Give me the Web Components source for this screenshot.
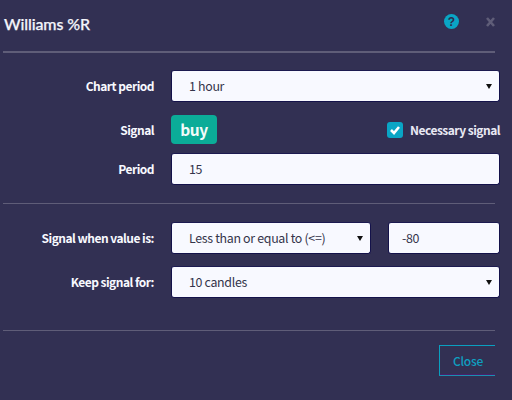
<!DOCTYPE html>
<html><head><meta charset="utf-8">
<style>
html,body{margin:0;padding:0;background:#323053;}
body{width:512px;height:400px;overflow:hidden;font-family:"Noto Sans CJK JP","Noto Sans",sans-serif;}
</style></head><body>
<template id="t-modal"><style>
:host{display:block;box-sizing:border-box;width:512px;height:400px;background:#323053;color:#f8f9ff;}
.head{display:flex;align-items:center;box-sizing:border-box;margin-left:3px;width:492px;border-bottom:2px solid #5f5d78;height:53px;padding-bottom:4px;}
.title{font:500 16px/22px Lato,sans-serif;letter-spacing:-.12px;flex:1;padding-left:1px;color:#f4f5fb;-webkit-text-stroke:.25px #f4f5fb;}
.body{padding-top:17px;display:flex;flex-direction:column;}
.foot{margin:32px 0 0 3px;width:492px;border-top:1px solid #5f5d78;padding-top:14px;display:flex;justify-content:flex-end;}
</style>
<div class="head"><div class="title"><slot name="title"></slot></div><slot name="tools"></slot></div>
<div class="body"><slot></slot></div>
<div class="foot"><slot name="foot"></slot></div>
</template>

<template id="t-row"><style>
:host{display:grid;grid-template-columns:154px 329px;column-gap:17px;align-items:center;margin-bottom:var(--mb,12px);}
.l{text-align:right;font-size:12px;letter-spacing:-.52px;font-weight:700;line-height:18px;color:#f8f9ff;white-space:nowrap;}
.c{display:flex;align-items:center;}
</style><div class="l"><slot name="label"></slot></div><div class="c"><slot></slot></div></template>

<template id="t-field"><style>
:host{display:flex;box-sizing:border-box;height:32px;flex:1;align-items:center;position:relative;background:#f8f9ff;border:1px solid #14124a;border-top-color:#1c1a50;border-radius:3px;color:#34344a;font-size:12.4px;letter-spacing:-.32px;padding-left:17px;}
.a{display:none;position:absolute;right:7px;top:13px;width:0;height:0;border-left:3px solid transparent;border-right:3px solid transparent;border-top:5px solid #111;}
:host([select]) .a{display:block;}
</style><slot></slot><span class="a"></span></template>

<template id="t-check"><style>
:host{display:flex;align-items:center;gap:7px;font-size:12px;letter-spacing:-.52px;font-weight:700;color:#e9e9f4;white-space:nowrap;}
.b{width:16px;height:16px;border-radius:3px;background:#0aa5c5;display:flex;align-items:center;justify-content:center;}
</style><span class="b"><svg width="12" height="10" viewBox="0 0 12 10"><path d="M2 5l3 3 5-6" fill="none" stroke="#fff" stroke-width="2.6"/></svg></span><slot></slot></template>

<template id="t-badge"><style>
:host{display:flex;width:46px;height:29px;align-items:center;justify-content:center;background:#0bac98;border-radius:4px;color:#f3fbfa;font-size:15.5px;letter-spacing:-.4px;font-weight:700;line-height:20px;padding-bottom:1px;box-sizing:border-box;}
</style><slot></slot></template>

<template id="t-tools"><style>
:host{display:flex;align-items:flex-start;align-self:flex-start;margin-top:14px;}
svg{display:block;}
.q{margin-right:27px;}
.x{margin-top:3px;}
</style>
<svg class="q" width="15" height="15" viewBox="0 0 15 15"><circle cx="7.5" cy="7.5" r="7.5" fill="#0aa5c5"/><text x="7.5" y="11.8" text-anchor="middle" font-family="Liberation Sans" font-weight="700" font-size="12" fill="#2d2c4d">?</text></svg>
<svg class="x" width="9" height="10" viewBox="0 0 9 10"><path d="M1 1l7 8M8 1l-7 8" stroke="#5f5d78" stroke-width="2.6" fill="none"/></svg>
</template>

<template id="t-button"><style>
:host{display:flex;box-sizing:border-box;width:56px;height:31px;align-items:center;justify-content:center;border:1px solid #0a9fc0;border-bottom-color:#1a8fb0;border-right:0;box-shadow:inset 0 -1px 0 #4a1f6a;color:#0f9fc0;font-size:12px;letter-spacing:-.2px;font-weight:500;padding-left:1px;}
</style><slot></slot></template>

<x-modal>
<span slot="title">Williams %R</span>
<x-tools slot="tools"></x-tools>
<x-row style="--mb:13px"><span slot="label">Chart period</span><x-field select>1 hour</x-field></x-row>
<x-row style="--mb:9px"><span slot="label">Signal</span><div style="display:flex;flex:1;justify-content:space-between;align-items:center;height:29px"><x-badge>buy</x-badge><x-check>Necessary signal</x-check></div></x-row>
<x-row style="--mb:0"><span slot="label">Period</span><x-field>15</x-field></x-row>
<div style="height:18px;border-bottom:1px solid #5f5d78;margin:0 17px 18px 3px;width:492px"></div>
<x-row><span slot="label">Signal when value is:</span><div style="display:flex;flex:1;gap:17px"><x-field select style="flex:0 0 200px">Less than or equal to (&lt;=)</x-field><x-field style="padding-left:13px">-80</x-field></div></x-row>
<x-row style="--mb:0"><span slot="label">Keep signal for:</span><x-field select>10 candles</x-field></x-row>
<x-button slot="foot">Close</x-button>
</x-modal>

<script>
for (const n of ['modal','row','field','check','badge','tools','button']) {
  customElements.define('x-'+n, class extends HTMLElement {
    constructor(){super();this.attachShadow({mode:'open'}).appendChild(document.getElementById('t-'+n).content.cloneNode(true));}
  });
}
</script>
</body></html>
